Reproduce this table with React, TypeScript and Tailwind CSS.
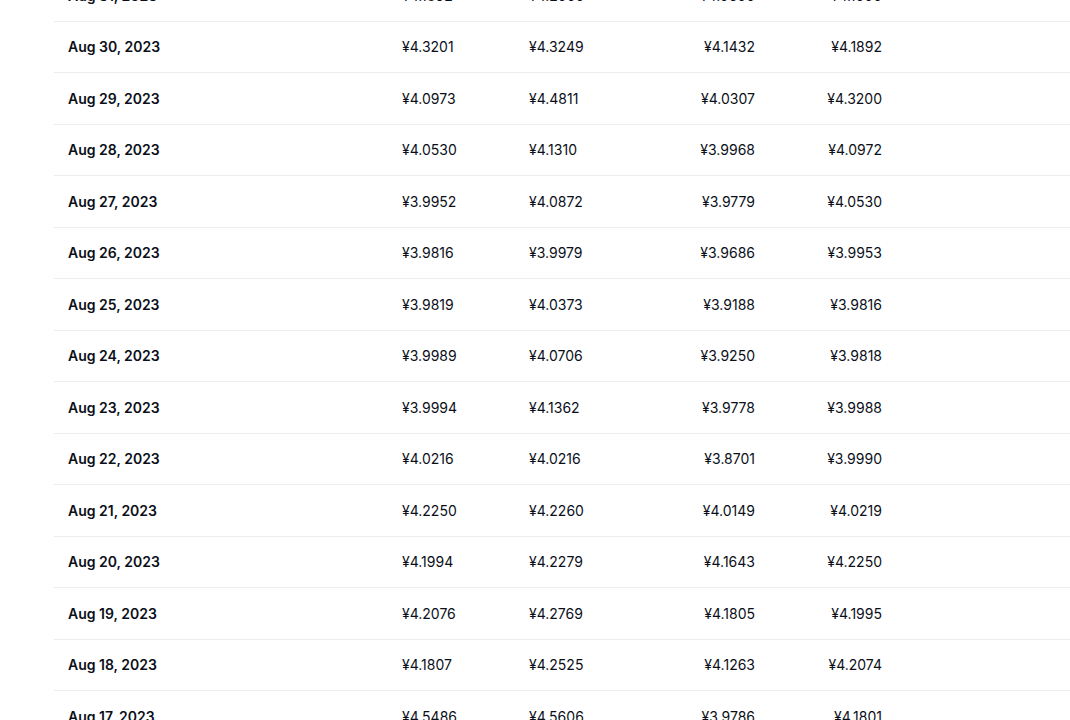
import React from "react";

type Row = {
  date: string;
  open: string;
  high: string;
  low: string;
  close: string;
};

const rows: Row[] = [
  { date: "Aug 31, 2023", open: "¥4.1892", high: "¥4.2000", low: "¥4.0600", close: "¥4.1000" },
  { date: "Aug 30, 2023", open: "¥4.3201", high: "¥4.3249", low: "¥4.1432", close: "¥4.1892" },
  { date: "Aug 29, 2023", open: "¥4.0973", high: "¥4.4811", low: "¥4.0307", close: "¥4.3200" },
  { date: "Aug 28, 2023", open: "¥4.0530", high: "¥4.1310", low: "¥3.9968", close: "¥4.0972" },
  { date: "Aug 27, 2023", open: "¥3.9952", high: "¥4.0872", low: "¥3.9779", close: "¥4.0530" },
  { date: "Aug 26, 2023", open: "¥3.9816", high: "¥3.9979", low: "¥3.9686", close: "¥3.9953" },
  { date: "Aug 25, 2023", open: "¥3.9819", high: "¥4.0373", low: "¥3.9188", close: "¥3.9816" },
  { date: "Aug 24, 2023", open: "¥3.9989", high: "¥4.0706", low: "¥3.9250", close: "¥3.9818" },
  { date: "Aug 23, 2023", open: "¥3.9994", high: "¥4.1362", low: "¥3.9778", close: "¥3.9988" },
  { date: "Aug 22, 2023", open: "¥4.0216", high: "¥4.0216", low: "¥3.8701", close: "¥3.9990" },
  { date: "Aug 21, 2023", open: "¥4.2250", high: "¥4.2260", low: "¥4.0149", close: "¥4.0219" },
  { date: "Aug 20, 2023", open: "¥4.1994", high: "¥4.2279", low: "¥4.1643", close: "¥4.2250" },
  { date: "Aug 19, 2023", open: "¥4.2076", high: "¥4.2769", low: "¥4.1805", close: "¥4.1995" },
  { date: "Aug 18, 2023", open: "¥4.1807", high: "¥4.2525", low: "¥4.1263", close: "¥4.2074" },
  { date: "Aug 17, 2023", open: "¥4.5486", high: "¥4.5606", low: "¥3.9786", close: "¥4.1801" },
];

const App: React.FC = () => {
  return (
    <div className="h-[720px] overflow-hidden bg-white font-['Inter','Noto_Sans',sans-serif] text-[14px] text-[#0b0f19]">
      <div className="-mt-[30px] pl-[54px]">
        {rows.map((row) => (
          <div
            key={row.date}
            className="flex h-[51.5px] items-center border-b border-[#ececec] px-[14px]"
          >
            <div className="w-[334px] font-semibold">{row.date}</div>
            <div className="w-[127px]">{row.open}</div>
            <div className="w-[99px]">{row.high}</div>
            <div className="w-[127px] text-right">{row.low}</div>
            <div className="w-[127px] text-right">{row.close}</div>
          </div>
        ))}
      </div>
    </div>
  );
};

export default App;
